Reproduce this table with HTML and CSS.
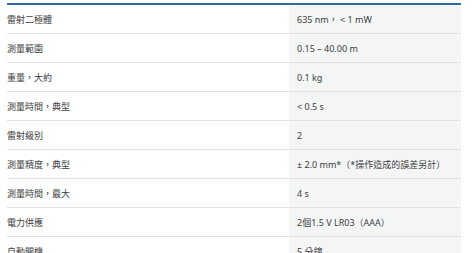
FILE: index.html
```html
<!DOCTYPE html>
<html lang="zh-Hant">
<head>
<meta charset="utf-8">
<link rel="stylesheet" href="styles.css">
</head>
<body>
<div class="specs">
  <div class="row"><div class="label">雷射二極體</div><div class="value">635 nm， &lt; 1 mW</div></div>
  <div class="row"><div class="label">測量範圍</div><div class="value">0.15 – 40.00 m</div></div>
  <div class="row"><div class="label">重量，大約</div><div class="value">0.1 kg</div></div>
  <div class="row"><div class="label">測量時間，典型</div><div class="value">&lt; 0.5 s</div></div>
  <div class="row"><div class="label">雷射級別</div><div class="value">2</div></div>
  <div class="row"><div class="label">測量精度，典型</div><div class="value">± 2.0 mm*（*操作造成的誤差另計）</div></div>
  <div class="row"><div class="label">測量時間，最大</div><div class="value">4 s</div></div>
  <div class="row"><div class="label">電力供應</div><div class="value">2個1.5 V LR03（AAA）</div></div>
  <div class="row"><div class="label">自動關機</div><div class="value">5 分鐘</div></div>
</div>
</body>
</html>
```
FILE: styles.css
```css
html, body {
  margin: 0;
  padding: 0;
  background: #ffffff;
}
body {
  font-family: "Noto Sans", "Noto Sans CJK TC", sans-serif;
  font-size: 9px;
  color: #404040;
}
.specs {
  margin: 3px 0 0 7px;
  width: 454px;
  border-top: 2px solid #2e6aa1;
}
.row {
  display: grid;
  grid-template-columns: 282px 172px;
  height: 28px;
  border-bottom: 1px solid #e2e2e2;
}
.label {
  display: flex;
  align-items: center;
}
.value {
  display: flex;
  align-items: center;
  background: #f4f5f5;
  padding-left: 8px;
}
```
